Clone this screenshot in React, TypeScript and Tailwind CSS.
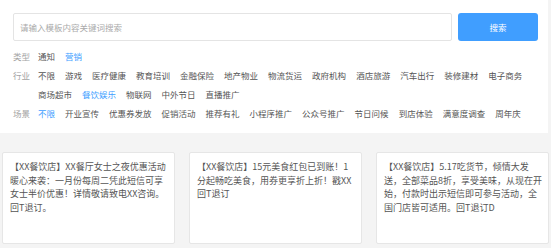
import React from 'react';

const industries = ['不限', '游戏', '医疗健康', '教育培训', '金融保险', '地产物业', '物流货运', '政府机构', '酒店旅游', '汽车出行', '装修建材', '电子商务', '商场超市', '餐饮娱乐', '物联网', '中外节日', '直播推广'];
const scenes = ['不限', '开业宣传', '优惠券发放', '促销活动', '推荐有礼', '小程序推广', '公众号推广', '节日问候', '到店体验', '满意度调查', '周年庆'];

const cards = [
  ['【XX餐饮店】XX餐厅女士之夜优惠活动', '暖心来袭：一月份每周二凭此短信可享', '女士半价优惠！详情敬请致电XX咨询。', '回T退订。'],
  ['【XX餐饮店】15元美食红包已到账！1', '分起畅吃美食，用券更享折上折！戳XX', '回T退订'],
  ['【XX餐饮店】5.17吃货节，倾情大发', '送，全部菜品8折，享受美味，从现在开', '始，付款时出示短信即可参与活动，全', '国门店皆可适用。回T退订D'],
];

function FilterRow({ label, items, active }: { label: string; items: string[]; active: string }) {
  return (
    <div className="flex">
      <div className="w-[25px] shrink-0 text-[#a3a3a3]">{label}</div>
      <div className="flex flex-wrap gap-x-[10px]">
        {items.map((item) => (
          <span key={item} className={item === active ? 'text-[#409eff]' : 'text-[#555]'}>
            {item}
          </span>
        ))}
      </div>
    </div>
  );
}

export default function App() {
  return (
    <div
      className="w-[551px] h-[248px] overflow-hidden bg-[#f4f4f4]"
      style={{ fontFamily: '"Noto Sans CJK SC", "Noto Sans", sans-serif' }}
    >
      <div className="w-[548px] bg-white pl-[13px] pt-[13px] pb-[10px] text-[8.5px]">
        <div className="flex gap-[6px]">
          <div className="w-[439px] h-[28px] border border-[#e4e4e4] rounded-[2px] flex items-center pl-[6px] text-[#aaa]">
            请输入模板内容关键词搜索
          </div>
          <button className="w-[80px] h-[28px] rounded-[3px] bg-[#409eff] text-white text-[8.5px]">搜索</button>
        </div>
        <div className="mt-[6px] leading-[19px]">
          <FilterRow label="类型" items={['通知', '营销']} active="营销" />
          <FilterRow label="行业" items={industries} active="餐饮娱乐" />
          <FilterRow label="场景" items={scenes} active="不限" />
        </div>
      </div>
      <div className="grid grid-cols-3 gap-[14px] pl-[2px] pr-[2px] mt-[19px]">
        {cards.map((lines, i) => (
          <div key={i} className="h-[92px] bg-white border border-[#e6e6e6] rounded-[2px] px-[7px] pt-[7px] text-[9px] leading-[13.5px] text-[#555]">
            {lines.map((line) => (
              <div key={line} className="whitespace-nowrap">{line}</div>
            ))}
          </div>
        ))}
      </div>
    </div>
  );
}
